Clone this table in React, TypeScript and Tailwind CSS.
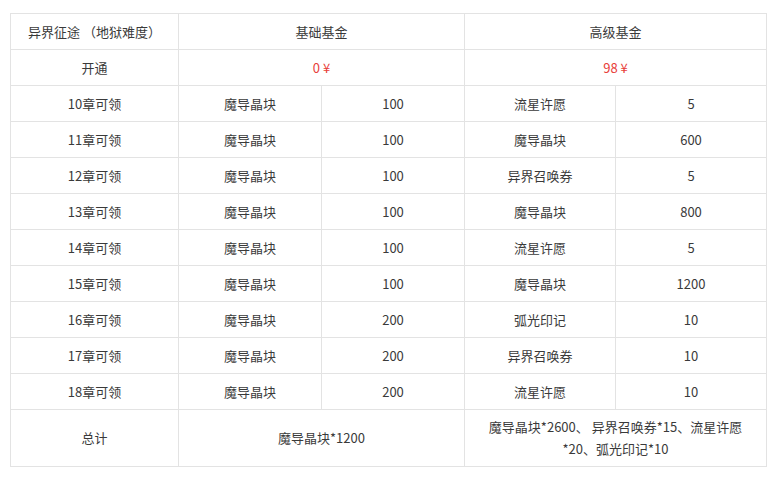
import React from "react";

const rows: [string, string, string, string, string][] = [
  ["10章可领", "魔导晶块", "100", "流星许愿", "5"],
  ["11章可领", "魔导晶块", "100", "魔导晶块", "600"],
  ["12章可领", "魔导晶块", "100", "异界召唤券", "5"],
  ["13章可领", "魔导晶块", "100", "魔导晶块", "800"],
  ["14章可领", "魔导晶块", "100", "流星许愿", "5"],
  ["15章可领", "魔导晶块", "100", "魔导晶块", "1200"],
  ["16章可领", "魔导晶块", "200", "弧光印记", "10"],
  ["17章可领", "魔导晶块", "200", "异界召唤券", "10"],
  ["18章可领", "魔导晶块", "200", "流星许愿", "10"],
];

const td = "border border-[#e3e3e3] text-center align-middle px-2 p-0";

export default function App() {
  return (
    <div
      className="w-[781px] h-[483px] bg-white pt-[13px] pl-[10px] text-[13px] text-[#3a3a3a]"
      style={{ fontFamily: '"Noto Sans CJK SC", "Noto Sans", sans-serif' }}
    >
      <table className="border-collapse table-fixed w-[756px]">
        <colgroup>
          <col className="w-[168px]" />
          <col className="w-[143px]" />
          <col className="w-[143px]" />
          <col className="w-[151px]" />
          <col className="w-[151px]" />
        </colgroup>
        <tbody>
          <tr className="h-[36px]">
            <td className={td}>异界征途 （地狱难度）</td>
            <td className={td} colSpan={2}>基础基金</td>
            <td className={td} colSpan={2}>高级基金</td>
          </tr>
          <tr className="h-[36px]">
            <td className={td}>开通</td>
            <td className={`${td} text-[#e8403a]`} colSpan={2}>0 ¥</td>
            <td className={`${td} text-[#e8403a]`} colSpan={2}>98 ¥</td>
          </tr>
          {rows.map((r) => (
            <tr key={r[0]} className="h-[36px]">
              {r.map((c, i) => (
                <td key={i} className={td}>{c}</td>
              ))}
            </tr>
          ))}
          <tr className="h-[57px]">
            <td className={td}>总计</td>
            <td className={td} colSpan={2}>魔导晶块*1200</td>
            <td className={`${td} leading-[22px]`} colSpan={2}>
              魔导晶块*2600、 异界召唤券*15、流星许愿*20、弧光印记*10
            </td>
          </tr>
        </tbody>
      </table>
    </div>
  );
}
